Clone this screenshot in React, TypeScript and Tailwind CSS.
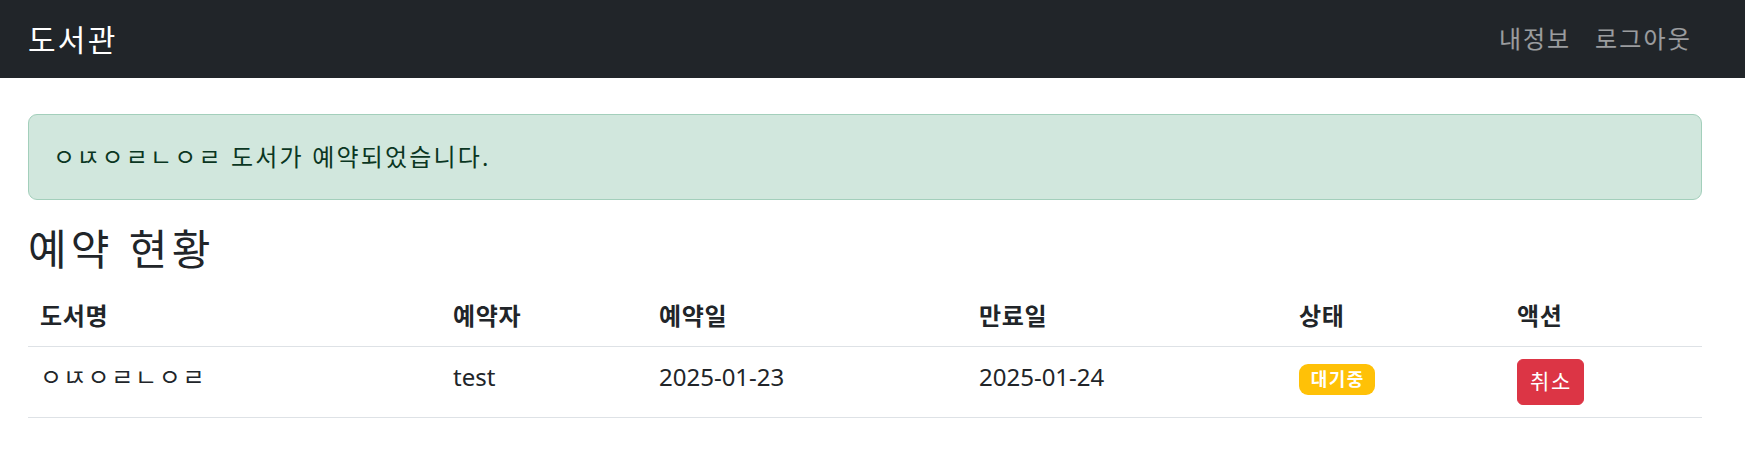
import React from "react";

export default function App() {
  return (
    <div className="min-h-[453px] bg-white font-['Noto_Sans','Noto_Sans_CJK_KR',sans-serif] text-[#212529]">
      <nav className="h-[78px] bg-[#212529] flex items-center">
        <div className="ml-[28px] w-[1674px] flex items-center justify-between">
          <span className="text-[30px] leading-[45px] text-white tracking-[0.075em]">도서관</span>
          <div className="flex items-center">
            <a className="px-[12px] text-[24px] leading-[36px] text-white/55 tracking-[0.08em]">내정보</a>
            <a className="pl-[12px] pr-[10px] text-[24px] leading-[36px] text-white/55 tracking-[0.09em]">로그아웃</a>
          </div>
        </div>
      </nav>
      <main className="ml-[28px] w-[1674px] pt-[36px]">
        <div className="border border-[#a3cfbb] bg-[#d1e7dd] text-[#0a3622] rounded-[9px] p-[24px] text-[24px] leading-[36px] mb-[24px] tracking-[0.09em]">
          ㅇㄵㅇㄹㄴㅇㄹ 도서가 예약되었습니다.
        </div>
        <h3 className="text-[42px] leading-[50.4px] mb-[12px] font-normal tracking-[0.1em]">예약 현황</h3>
        <table className="w-full table-fixed border-collapse text-[24px] leading-[36px] align-top">
          <colgroup>
            <col className="w-[413px]" />
            <col className="w-[206px]" />
            <col className="w-[320px]" />
            <col className="w-[320px]" />
            <col className="w-[218px]" />
            <col className="w-[197px]" />
          </colgroup>
          <thead>
            <tr>
              <th className="p-[12px] text-left font-bold border-b border-[#dee2e6] tracking-[0.03em]">도서명</th>
              <th className="p-[12px] text-left font-bold border-b border-[#dee2e6] tracking-[0.03em]">예약자</th>
              <th className="p-[12px] text-left font-bold border-b border-[#dee2e6] tracking-[0.03em]">예약일</th>
              <th className="p-[12px] text-left font-bold border-b border-[#dee2e6] tracking-[0.03em]">만료일</th>
              <th className="p-[12px] text-left font-bold border-b border-[#dee2e6] tracking-[0.03em]">상태</th>
              <th className="p-[12px] text-left font-bold border-b border-[#dee2e6] tracking-[0.03em]">액션</th>
            </tr>
          </thead>
          <tbody>
            <tr>
              <td className="p-[12px] align-top border-b border-[#dee2e6] tracking-[0.07em]">ㅇㄵㅇㄹㄴㅇㄹ</td>
              <td className="p-[12px] align-top border-b border-[#dee2e6]">test</td>
              <td className="p-[12px] align-top border-b border-[#dee2e6]">2025-01-23</td>
              <td className="p-[12px] align-top border-b border-[#dee2e6]">2025-01-24</td>
              <td className="p-[12px] align-top border-b border-[#dee2e6]">
                <span className="inline-block bg-[#ffc107] text-white text-[18px] font-bold leading-none pl-[11.7px] pr-[10.3px] py-[6.3px] rounded-[9px] tracking-[0.08em]">
                  대기중
                </span>
              </td>
              <td className="p-[12px] align-top border-b border-[#dee2e6]">
                <button className="bg-[#dc3545] border border-[#dc3545] text-white text-[21px] leading-[31.5px] pl-[12px] pr-[10.5px] py-[6px] rounded-[6px] tracking-[0.08em]">
                  취소
                </button>
              </td>
            </tr>
          </tbody>
        </table>
      </main>
    </div>
  );
}
